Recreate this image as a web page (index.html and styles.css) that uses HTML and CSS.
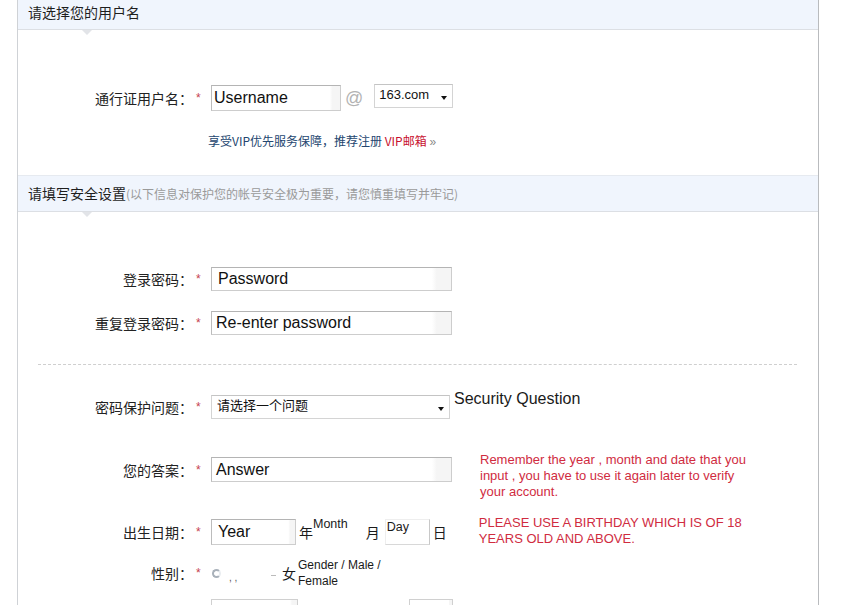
FILE: index.html
```html
<!DOCTYPE html>
<html lang="zh-CN">
<head>
<meta charset="utf-8">
<title>注册</title>
<link rel="stylesheet" href="styles.css">
</head>
<body>
<div class="wrap">
  <div class="hd hd1">请选择您的用户名</div>
  <div class="sec1">
    <div class="row row-user">
      <span class="lbl">通行证用户名：</span><span class="star">*</span>
      <div class="inp w130 h26"><span class="ph">Username</span></div>
      <span class="at">@</span>
      <div class="sel sel-dom"><span class="seltxt">163.com</span><span class="arrow"></span></div>
    </div>
    <div class="vip">享受VIP优先服务保障，推荐注册 <span class="red">VIP邮箱</span> <span class="raquo">»</span></div>
  </div>
  <div class="hd hd2">请填写安全设置<span class="sub">(以下信息对保护您的帐号安全极为重要，请您慎重填写并牢记)</span></div>
  <div class="sec2">
    <div class="row row-pw">
      <span class="lbl">登录密码：</span><span class="star">*</span>
      <div class="inp w241 h24 pad6"><span class="ph">Password</span></div>
    </div>
    <div class="row row-pw2">
      <span class="lbl">重复登录密码：</span><span class="star">*</span>
      <div class="inp w241 h24 pad4"><span class="ph">Re-enter password</span></div>
    </div>
    <div class="dash"></div>
    <div class="row row-q">
      <span class="lbl">密码保护问题：</span><span class="star">*</span>
      <div class="sel sel-q"><span class="seltxt cjk">请选择一个问题</span><span class="arrow"></span></div>
      <span class="en16 sq">Security Question</span>
    </div>
    <div class="row row-ans">
      <span class="lbl">您的答案：</span><span class="star">*</span>
      <div class="inp w241 h25 pad4"><span class="ph">Answer</span></div>
      <p class="note note-ans">Remember the year , month and date that you input , you have to use it again later to verify your account.</p>
    </div>
    <div class="row row-bd">
      <span class="lbl">出生日期：</span><span class="star">*</span>
      <div class="inp w85 h26 pad6"><span class="ph">Year</span></div>
      <span class="unit">年</span>
      <span class="sup sup-m">Month</span>
      <span class="unit unit-m">月</span>
      <div class="daybox"><span class="sup">Day</span></div>
      <span class="unit">日</span>
      <p class="note note-bd">PLEASE USE A BIRTHDAY WHICH IS OF 18 YEARS OLD AND ABOVE.</p>
    </div>
    <div class="row row-sex">
      <span class="lbl">性别：</span><span class="star">*</span>
      <span class="radio"></span>
      <span class="marks">, ,</span>
      <span class="dashmark"></span>
      <span class="unit unit-f">女</span>
      <span class="gnote">Gender / Male / Female</span>
    </div>
    <div class="row row-next">
      <span class="lbl"></span><span class="star"></span>
      <div class="inp w87 h26"></div>
      <div class="inp w44 h26 ml111"></div>
    </div>
  </div>
</div>
</body>
</html>
```

FILE: styles.css
```css
html, body {
  margin: 0;
  padding: 0;
  background: #fff;
}
body {
  font-family: "Noto Sans CJK SC", "Liberation Sans", sans-serif;
  color: #222;
  overflow: hidden;
}
.wrap {
  margin-left: 17px;
  width: 800px;
  border-left: 1px solid #cfd2d6;
  border-right: 1px solid #b9bbbe;
  min-height: 640px;
}
.hd {
  position: relative;
  background: #f0f5fd;
  padding-left: 10px;
  font-size: 14px;
  color: #1e1e1e;
}
.hd::after {
  content: "";
  position: absolute;
  left: 64px;
  bottom: -6px;
  border-left: 5px solid transparent;
  border-right: 5px solid transparent;
  border-top: 5px solid #e2e4e8;
}
.hd1 {
  height: 29px;
  line-height: 25px;
  border-bottom: 1px solid #dcdfe4;
}
.hd2 {
  height: 35px;
  line-height: 34px;
  border-top: 1px solid #e6eaf0;
  border-bottom: 1px solid #dcdfe4;
}
.sub {
  font-size: 12px;
  color: #9a9a9a;
}
.sec1 {
  padding-top: 55px;
  padding-bottom: 25px;
}
.row {
  display: flex;
  align-items: center;
}
.lbl {
  width: 175px;
  flex: none;
  text-align: right;
  font-size: 14px;
  color: #222;
  white-space: nowrap;
}
.star {
  width: 18px;
  flex: none;
  padding-left: 3px;
  box-sizing: border-box;
  color: #c6424f;
  font-family: "Liberation Sans", sans-serif;
  font-size: 12px;
}
.row-user { height: 26px; }
.inp {
  flex: none;
  box-sizing: border-box;
  border: 1px solid #cdcdcd;
  border-top-color: #b4b4b4;
  border-left-color: #bcbcbc;
  background: linear-gradient(to right, #fff 92%, #f5f5f5 94%);
  display: flex;
  align-items: center;
  padding-left: 2px;
}
.ph {
  font-family: "Liberation Sans", sans-serif;
  font-size: 16px;
  color: #111;
}
.w130 { width: 130px; }
.w241 { width: 241px; }
.w85 { width: 85px; }
.w87 { width: 87px; }
.w44 { width: 44px; }
.h24 { height: 24px; }
.h25 { height: 25px; }
.h26 { height: 26px; }
.pad6 { padding-left: 6px; }
.pad4 { padding-left: 4px; }
.ml111 { margin-left: 111px; }
.at {
  margin-left: 4px;
  font-family: "Liberation Sans", sans-serif;
  font-size: 18px;
  color: #b3b3b3;
}
.sel {
  flex: none;
  box-sizing: border-box;
  border: 1px solid #d4d4d4;
  border-top-color: #c4c4c4;
  height: 24px;
  position: relative;
  background: #fff;
}
.sel-dom {
  width: 79px;
  margin-left: 11px;
  align-self: flex-start;
  margin-top: -1px;
}
.sel-dom .seltxt { padding-top: 2px; }
.sel-q {
  width: 239px;
}
.seltxt {
  display: block;
  padding: 1px 0 0 4px;
  font-family: "Liberation Sans", sans-serif;
  font-size: 13px;
  line-height: 16px;
  color: #111;
}
.seltxt.cjk {
  font-family: "Noto Sans CJK SC", sans-serif;
  padding-left: 5px;
}
.arrow {
  position: absolute;
  right: 5px;
  top: 11px;
  border-left: 3.5px solid transparent;
  border-right: 3.5px solid transparent;
  border-top: 4px solid #111;
}
.vip {
  margin-top: 22px;
  padding-left: 190px;
  font-size: 12px;
  line-height: 16px;
  color: #24466f;
}
.red { color: #c8102e; }
.raquo {
  color: #8a8a8a;
  font-family: "Liberation Sans", sans-serif;
}
.row-pw { margin-top: 55px; height: 24px; }
.row-pw2 { margin-top: 20px; height: 24px; }
.dash {
  margin: 29px 0 0 20px;
  width: 759px;
  border-top: 1px dashed #cfcfcf;
}
.row-q { margin-top: 30px; height: 24px; }
.en16 {
  font-family: "Liberation Sans", sans-serif;
  font-size: 16px;
  color: #1a1a1a;
}
.sq {
  margin-left: 4px;
  align-self: flex-start;
  margin-top: -5px;
}
.row-ans { margin-top: 38px; height: 25px; }
.note {
  margin: 0;
  font-family: "Liberation Sans", sans-serif;
  font-size: 13px;
  line-height: 16px;
  color: #d02c3f;
  align-self: flex-start;
}
.note-ans {
  margin-left: 28px;
  width: 272px;
  margin-top: -5px;
}
.row-bd { margin-top: 37px; height: 26px; }
.unit {
  font-size: 14px;
  color: #1a1a1a;
  margin-left: 3px;
}
.sup {
  font-family: "Liberation Sans", sans-serif;
  font-size: 12.5px;
  line-height: 14px;
  color: #1a1a1a;
  align-self: flex-start;
}
.sup-m {
  margin-top: -2px;
}
.unit-m { margin-left: 18px; }
.daybox {
  flex: none;
  box-sizing: border-box;
  width: 45px;
  height: 26px;
  margin-left: 5px;
  border: 1px solid #eeeeee;
  border-right-color: #c8c8c8;
  border-bottom-color: #d8d8d8;
  padding-left: 1px;
  display: flex;
}
.daybox .sup { margin-top: 0; }
.note-bd {
  margin-left: 32px;
  width: 272px;
  margin-top: -4px;
}
.row-sex { margin-top: 18px; height: 20px; }
.radio {
  flex: none;
  width: 9px;
  height: 9px;
  box-sizing: border-box;
  border-radius: 50%;
  border: 2px solid #a9b1ba;
  border-right-color: #e8ecf0;
  margin-left: 1px;
}
.marks {
  margin-left: 8px;
  font-family: "Liberation Sans", sans-serif;
  font-size: 10px;
  color: #555;
  align-self: flex-end;
  width: 20px;
}
.dashmark {
  margin-left: 22px;
  width: 5px;
  border-top: 1px solid #bbb;
  margin-top: 4px;
}
.unit-f { margin-left: 6px; }
.gnote {
  font-family: "Liberation Sans", sans-serif;
  font-size: 12px;
  line-height: 16px;
  color: #1a1a1a;
  width: 100px;
  margin-left: 2px;
}
.row-next { margin-top: 16px; height: 26px; }
.row-next .inp { border-color: #d0d0d0; }
```
